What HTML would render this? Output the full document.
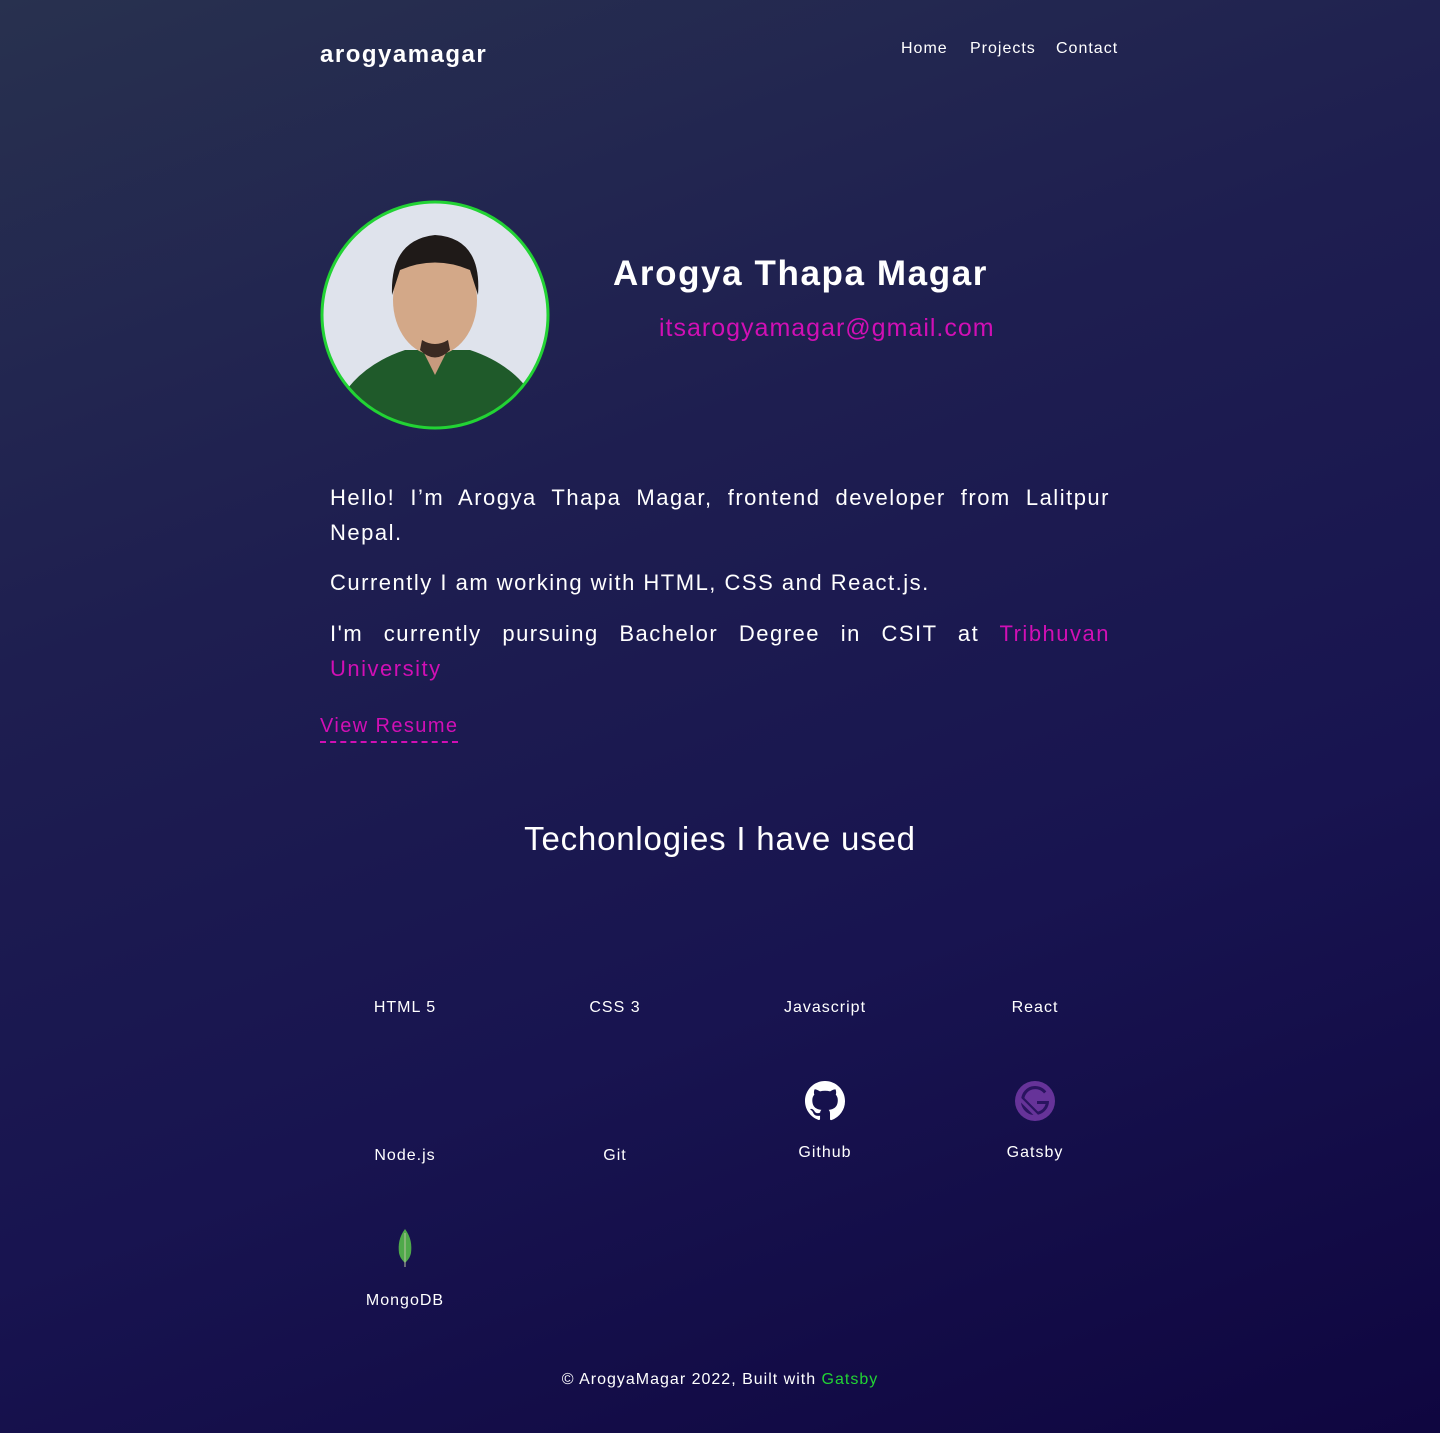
<!DOCTYPE html>
<html><head><meta charset="utf-8"><style>
*{margin:0;padding:0;box-sizing:border-box}
html,body{width:1440px;height:1433px;overflow:hidden}
body{background:linear-gradient(160deg,#28314f 0%,#1e1e50 35%,#181450 65%,#0f0640 100%);font-family:"Liberation Sans",sans-serif;color:#fff;position:relative}
.a{position:absolute}
.logo{left:320px;top:41px;font-size:24px;font-weight:bold;letter-spacing:1.5px}
.nav{top:40px;font-size:16px;letter-spacing:1px}
.name{left:613px;top:254px;font-size:35px;font-weight:bold;letter-spacing:1.6px}
.mail{left:659px;top:314px;font-size:25px;color:#d10fb5;letter-spacing:1px}
.p{left:330px;width:780px;font-size:22px;line-height:35px;text-align:justify;letter-spacing:1.5px}
.pk{color:#d10fb5}
.res{left:320px;top:715px;font-size:20px;color:#d10fb5;border-bottom:2px dashed #d10fb5;padding-bottom:3px;letter-spacing:1.4px}
.h2{left:0;width:1440px;text-align:center;top:820px;font-size:33px;letter-spacing:0.8px}
.t{width:200px;text-align:center;font-size:16px;letter-spacing:1px}
.foot{left:0;width:1440px;text-align:center;top:1371px;font-size:16px;letter-spacing:1px}
</style></head><body>
<div class="a logo">arogyamagar</div>
<div class="a nav" style="left:901px">Home</div>
<div class="a nav" style="left:970px">Projects</div>
<div class="a nav" style="left:1056px">Contact</div>

<svg class="a" style="left:320px;top:200px" width="230" height="230" viewBox="0 0 230 230">
<defs><clipPath id="c"><circle cx="115" cy="115" r="112"/></clipPath></defs>
<g clip-path="url(#c)">
<rect width="230" height="230" fill="#dfe3ec"/>
<path d="M20 200 Q40 165 85 150 L150 150 Q195 165 215 200 L215 240 L20 240Z" fill="#1f5a2a"/>
<path d="M100 145 L115 175 L130 145Z" fill="#c79a7e"/>
<ellipse cx="115" cy="100" rx="42" ry="55" fill="#d3a888"/>
<path d="M72 95 Q70 40 115 35 Q162 38 158 95 L150 70 Q115 55 80 70Z" fill="#1f1a18"/>
<path d="M100 150 Q115 165 130 150 L128 140 Q115 148 102 140Z" fill="#3a2a22"/>
</g>
<circle cx="115" cy="115" r="113" fill="none" stroke="#22d334" stroke-width="3"/>
</svg>

<div class="a name">Arogya Thapa Magar</div>
<div class="a mail">itsarogyamagar@gmail.com</div>

<div class="a p" style="top:480px">Hello! I’m Arogya Thapa Magar, frontend developer from Lalitpur Nepal.</div>
<div class="a p" style="top:565px">Currently I am working with HTML, CSS and React.js.</div>
<div class="a p" style="top:616px">I'm currently pursuing Bachelor Degree in CSIT at <span class="pk">Tribhuvan University</span></div>
<div class="a res">View Resume</div>

<div class="a h2">Techonlogies I have used</div>

<div class="a t" style="left:305px;top:999px">HTML 5</div>
<div class="a t" style="left:515px;top:999px">CSS 3</div>
<div class="a t" style="left:725px;top:999px">Javascript</div>
<div class="a t" style="left:935px;top:999px">React</div>

<div class="a t" style="left:305px;top:1147px">Node.js</div>
<div class="a t" style="left:515px;top:1147px">Git</div>
<svg class="a" style="left:805px;top:1081px" width="40" height="40" viewBox="0 0 16 16"><path fill="#fff" d="M8 0C3.58 0 0 3.58 0 8c0 3.540 2.29 6.53 5.47 7.59.4.07.55-.17.55-.38v-1.33c-2.23.48-2.7-1.07-2.7-1.07-.36-.92-.89-1.17-.89-1.17-.73-.5.06-.49.06-.49.8.06 1.23.83 1.230.83.71 1.23 1.87.87 2.33.66.07-.52.28-.87.51-1.07-1.78-.2-3.64-.89-3.64-3.95 0-.87.31-1.59.82-2.15-.08-.2-.36-1.02.08-2.12 0 0 .67-.21 2.2.82.64-.18 1.32-.27 2-.27.68 0 1.36.09 2 .27 1.53-1.04 2.2-.82 2.2-.82.44 1.1.16 1.92.08 2.12.51.56.82 1.27.82 2.15 0 3.07-1.870 3.75-3.65 3.95.29.25.54.73.54 1.48v2.2c0 .21.15.46.55.38A8.013 8.013 0 0016 8c0-4.42-3.58-8-8-8z"/></svg>
<div class="a t" style="left:725px;top:1144px">Github</div>
<svg class="a" style="left:1015px;top:1081px" width="40" height="40" viewBox="0 0 40 40"><circle cx="20" cy="20" r="20" fill="#663399"/><path d="M34 20H22v3h8.6A11 11 0 0 1 23 30.6L9.4 17A11 11 0 0 1 29 12.5l2.3-2A14 14 0 0 0 6.3 17L23 33.7A14 14 0 0 0 34 20zM6 21.5A14 14 0 0 0 18.5 34L6 21.5z" fill="#2a1460"/></svg>
<div class="a t" style="left:935px;top:1144px">Gatsby</div>

<svg class="a" style="left:395px;top:1229px" width="20" height="40" viewBox="0 0 20 40"><path d="M10 0C4 8 3 16 4 24c1 5 4 8 6 10 2-2 5-5 6-10 1-8 0-16-6-24z" fill="#4fa94a"/><path d="M10 4v34" stroke="#b8c4a0" stroke-width="1"/></svg>
<div class="a t" style="left:305px;top:1292px">MongoDB</div>

<div class="a foot">© ArogyaMagar 2022, Built with <span style="color:#22d334">Gatsby</span></div>
</body></html>
